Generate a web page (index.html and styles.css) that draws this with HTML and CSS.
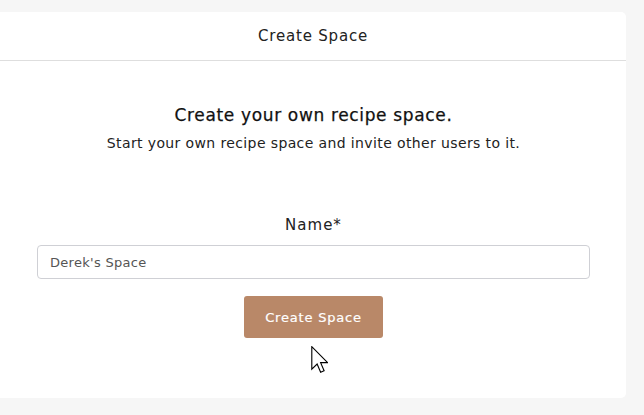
FILE: index.html
```html
<!DOCTYPE html>
<html lang="en">
<head>
<meta charset="utf-8">
<title>Create Space</title>
<link rel="stylesheet" href="styles.css">
</head>
<body>
<div class="page">
  <div class="card">
    <div class="card-header">Create Space</div>
    <div class="card-body">
      <h2 class="title">Create your own recipe space.</h2>
      <p class="subtitle">Start your own recipe space and invite other users to it.</p>
      <label class="label" for="name">Name*</label>
      <input class="input" id="name" type="text" value="Derek's Space">
      <div class="actions">
        <button class="btn" type="button">Create Space</button>
        <svg class="cursor" viewBox="0 0 12 20" width="17" height="28" aria-hidden="true">
          <path d="M0.5 0.5 L0.5 16.5 L4.3 12.9 L6.8 18.8 L9.3 17.7 L6.8 11.9 L11.8 11.9 Z" fill="#fff" stroke="#000" stroke-width="0.8" stroke-linejoin="miter"/>
        </svg>
      </div>
    </div>
  </div>
</div>
</body>
</html>
```

FILE: styles.css
```css
* { box-sizing: border-box; }
html, body {
  margin: 0;
  padding: 0;
  background: #f6f6f6;
  font-family: "DejaVu Sans", "Open Sans", sans-serif;
  color: #111;
}
.page {
  padding-top: 12px;
  height: 415px;
}
.card {
  width: 626px;
  background: #fff;
  border-radius: 0 5px 5px 0;
}
.card-header {
  height: 49px;
  border-bottom: 1px solid #dedede;
  display: flex;
  align-items: center;
  justify-content: center;
  font-size: 15px;
  letter-spacing: 0.8px;
  color: #222;
}
.card-body {
  padding: 42px 36px 60px 37px;
  display: flex;
  flex-direction: column;
  align-items: center;
}
.title {
  margin: 0;
  font-size: 17px;
  line-height: 24px;
  font-weight: normal;
  letter-spacing: 0.65px;
  color: #111;
  -webkit-text-stroke: 0.25px #111;
}
.subtitle {
  margin: 5px 0 0;
  font-size: 14px;
  line-height: 22px;
  letter-spacing: 0.38px;
  color: #222;
}
.label {
  margin-top: 59px;
  margin-bottom: -2px;
  font-size: 15px;
  line-height: 24px;
  letter-spacing: 1px;
  color: #222;
}
.input {
  margin-top: 10px;
  width: 100%;
  height: 34px;
  border: 1px solid #cfd0d5;
  border-radius: 4px;
  padding: 0 12px;
  font-family: inherit;
  font-size: 13px;
  letter-spacing: 0.3px;
  color: #555;
  outline: none;
}
.actions {
  position: relative;
  margin-top: 17px;
}
.btn {
  width: 139px;
  height: 42px;
  border: none;
  border-radius: 3px;
  background: #b98868;
  color: #fff;
  font-family: inherit;
  font-size: 13px;
  letter-spacing: 0.8px;
  -webkit-text-stroke: 0.2px #fff;
}
.cursor {
  position: absolute;
  left: 67px;
  top: 50px;
}
```
